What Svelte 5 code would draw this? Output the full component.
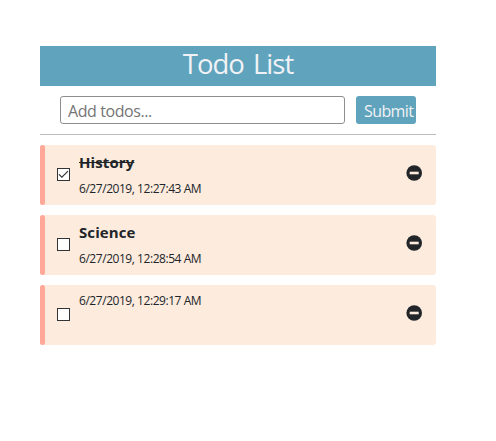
<script>
  let draft = $state('');
  let todos = $state([
    { id: 1, title: 'History', time: '6/27/2019, 12:27:43 AM', done: true },
    { id: 2, title: 'Science', time: '6/27/2019, 12:28:54 AM', done: false },
    { id: 3, title: '', time: '6/27/2019, 12:29:17 AM', done: false }
  ]);

  function add(event) {
    event.preventDefault();
    todos.push({ id: Date.now(), title: draft, time: new Date().toLocaleString('en-US'), done: false });
    draft = '';
  }

  function remove(id) {
    todos = todos.filter((t) => t.id !== id);
  }
</script>

<main>
  <h1>Todo List</h1>
  <form onsubmit={add}>
    <input class="field" placeholder="Add todos..." bind:value={draft} />
    <button class="submit">Submit</button>
  </form>
  <ul>
    {#each todos as todo (todo.id)}
      <li>
        <span class="stripe"></span>
        <button class="check" type="button" aria-label="Toggle" onclick={() => (todo.done = !todo.done)}>
          <svg width="13" height="13" viewBox="0 0 13 13">
            <rect x="0.5" y="0.5" width="12" height="12" fill="#fff" stroke="#333" />
            {#if todo.done}
              <path d="M2 6.3 4.9 9.2 11 3.1" fill="none" stroke="#333" stroke-width="1.2" />
            {/if}
          </svg>
        </button>
        <div class="text">
          {#if todo.title}
            <div class="title" class:done={todo.done}>{todo.title}</div>
          {/if}
          <div class="time">{todo.time}</div>
        </div>
        <button class="remove" type="button" aria-label="Remove" onclick={() => remove(todo.id)}>
          <svg width="16" height="16" viewBox="0 0 16 16">
            <circle cx="8.2" cy="8" r="7.8" fill="#212529" />
            <rect x="3.7" y="6.7" width="9" height="2.6" fill="#fdecde" />
          </svg>
        </button>
      </li>
    {/each}
  </ul>
</main>

<style>
  :global(body) {
    background: #fff;
  }
  main {
    width: 396px;
    margin-left: 40px;
    padding-top: 46px;
    color: #212529;
    font-family: 'Open Sans', 'Noto Sans', sans-serif;
  }
  h1 {
    height: 40px;
    margin: 0;
    background: #60a3bc;
    color: #f1f2f6;
    font-size: 27.5px;
    line-height: 36px;
    font-weight: 400;
    text-align: center;
    letter-spacing: -1px;
    word-spacing: 3px;
  }
  form {
    display: flex;
    gap: 11px;
    height: 49px;
    box-sizing: border-box;
    margin: 0;
    padding: 10px 20px;
    border-bottom: 1px solid #bcbcbc;
  }
  .field {
    box-sizing: border-box;
    width: 285px;
    height: 28px;
    padding: 2px 7px 0;
    border: 1px solid #8e8e90;
    border-radius: 3px;
    background: #fff;
    font: 16px/24px 'Open Sans', 'Noto Sans', sans-serif;
    letter-spacing: -0.42px;
    outline: none;
  }
  .field::placeholder {
    color: #757575;
    opacity: 1;
  }
  button {
    border: 0;
    padding: 0;
    background: none;
    display: flex;
  }
  .submit {
    width: 60px;
    height: 28px;
    padding-left: 8px;
    border-radius: 3px;
    background: #60a3bc;
    color: #f1f2f6;
    font: 16px/30px 'Open Sans', 'Noto Sans', sans-serif;
    letter-spacing: -0.6px;
  }
  ul {
    display: flex;
    flex-direction: column;
    gap: 10px;
    margin: 10px 0 0;
    padding: 0;
    list-style: none;
  }
  li {
    display: flex;
    align-items: center;
    box-sizing: border-box;
    height: 60px;
    padding-right: 14px;
    border-radius: 3px;
    background: #fdecde;
  }
  .stripe {
    width: 5px;
    height: 60px;
    margin-right: 12px;
    border-radius: 3px;
    background: #ffa799;
  }
  .check {
    margin-top: -1px;
  }
  .text {
    flex: 1;
    align-self: flex-start;
    margin-left: 9px;
    padding-top: 7px;
  }
  .title {
    height: 28px;
    margin-top: -2px;
    margin-bottom: 2px;
    font-size: 15px;
    line-height: 25px;
    font-weight: 700;
    letter-spacing: 0.1px;
  }
  .done {
    text-decoration: line-through;
  }
  .time {
    font-size: 12px;
    line-height: 18px;
    letter-spacing: -0.45px;
  }
  .remove {
    margin-top: -4px;
  }
</style>
